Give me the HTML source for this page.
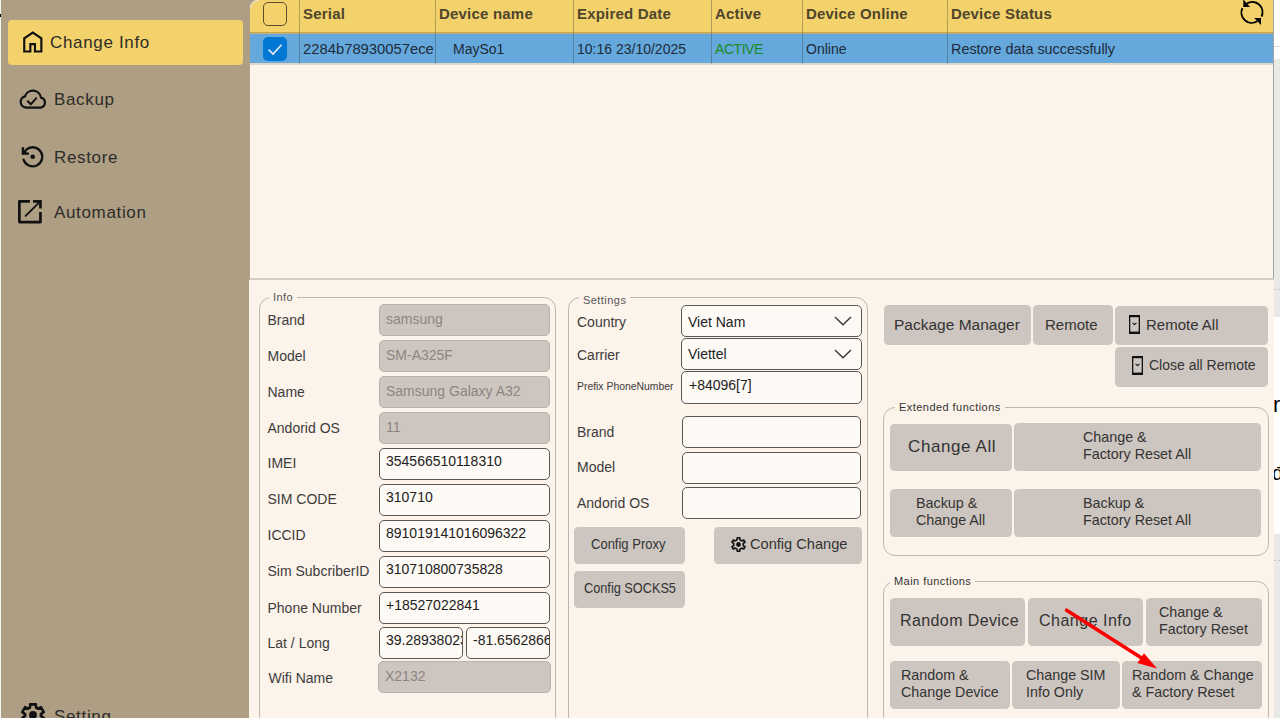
<!DOCTYPE html>
<html><head><meta charset="utf-8">
<style>
*{box-sizing:border-box;margin:0;padding:0}
html,body{width:1280px;height:718px;overflow:hidden;background:#fff;font-family:"Liberation Sans",sans-serif;color:#222}
.a{position:absolute;white-space:nowrap}
#side{position:absolute;left:1px;top:0;width:249px;height:718px;background:#ad9e84}
.hl{position:absolute;left:7.5px;top:20px;width:235.5px;height:44.5px;background:#f3d26b;border-radius:4px}
.nav{position:absolute;font-size:17px;letter-spacing:0.66px;color:#2e2c29;line-height:20px}
.ico{position:absolute}
/* table */
#thead{position:absolute;left:250px;top:0;width:1023px;height:34px;background:#f3d26b}
#trow{position:absolute;left:250px;top:34px;width:1023px;height:31px;background:#64a8dc;border-bottom:2px solid;border-image:linear-gradient(#cdc4b6,#e2d6c6) 1}
#tbody{position:absolute;left:250px;top:65px;width:1023px;height:213px;background:#fcf3ea;border-left:1px solid #fffaf3}
.sep{position:absolute;top:0;width:1px;height:64px;background:rgba(60,60,60,0.35)}
.th{position:absolute;top:5px;font-size:15px;font-weight:bold;color:#4f452c;line-height:18px;letter-spacing:0.2px}
.td{position:absolute;top:40px;font-size:14px;color:#1f2a3a;line-height:18px}
.cb{position:absolute;left:263px;width:24px;height:24px;border-radius:5px}
#hline{position:absolute;left:250px;top:278px;width:1024px;height:2px;background:#d3cdc6}
#panel{position:absolute;left:249px;top:280px;width:1025px;height:438px;background:#fcf3ea}
.gb{position:absolute;border:1px solid #b9b7b4;border-radius:12px}
.gl{position:absolute;font-size:11px;letter-spacing:0.45px;color:#555;background:#fcf3ea;padding:0 4px;line-height:12px}
.lbl{position:absolute;font-size:14px;color:#3c3c3c;line-height:16px;margin-top:0}
.inp{position:absolute;height:32px;border-radius:5px;font-size:14px;line-height:28px;padding-left:6px;overflow:hidden}
.dis{background:#cdc6c0;border:1px solid #b8b2ac;color:#8b8580}
.en{background:#fdf9f5;border:1px solid #5a5855;color:#222;line-height:25px}
.btn{position:absolute;background:#cdc5bf;border-radius:4.5px;color:#333;font-size:14.3px;text-align:center}
.btn span{position:absolute;white-space:nowrap}
</style></head><body>
<div class="a" style="left:0;top:0;width:1px;height:718px;background:#f4f4f4"></div>
<div class="a" style="left:0;top:14px;width:1px;height:3px;background:#000"></div>
<div id="side">
</div>
<div class="hl"></div>

<svg class="ico" style="left:22px;top:30px" width="22" height="24" viewBox="0 0 22 24"><path d="M2.25,21.45 V8.4 L10.8,2.5 L19.35,8.4 V21.45 H12.95 V14.15 H8.35 V21.45 Z" fill="none" stroke="#111" stroke-width="2.15" stroke-linejoin="miter"/></svg>
<div class="nav" style="left:50px;top:33px">Change Info</div>
<svg class="ico" style="left:18px;top:88px" width="30" height="22" viewBox="0 0 30 22"><path d="M8,19.6 H22.6 A5.1,5.1 0 0 0 23,9.6 A8.3,8.3 0 0 0 6.9,8.4 A5.7,5.7 0 0 0 8,19.6 Z" fill="none" stroke="#111" stroke-width="2.2"/><path d="M9.3,12.8 L12.8,16.3 L18.7,9.7" fill="none" stroke="#111" stroke-width="2"/></svg>
<div class="nav" style="left:54px;top:90px">Backup</div>
<svg class="ico" style="left:16px;top:142px" width="30" height="28" viewBox="0 0 30 28"><path d="M7.3,11.3 L10.31,7.70 A9.55,9.55 0 1 1 7.57,17.59" fill="none" stroke="#111" stroke-width="2.3" stroke-linecap="round"/><path d="M6.9,5.2 V11.6 H13" fill="none" stroke="#111" stroke-width="2.4"/><path d="M6.9,7 L6.9,11.6 L11.5,11.6 Z" fill="#111"/><circle cx="16.7" cy="14.8" r="2.3" fill="#111"/></svg>
<div class="nav" style="left:54px;top:148px">Restore</div>
<svg class="ico" style="left:17px;top:199px" width="26" height="26" viewBox="0 0 26 26"><path d="M12.9,2.35 H2.35 V23.05 H23.45 V13" fill="none" stroke="#111" stroke-width="2.7" stroke-linejoin="round"/><path d="M16,2.35 H23.45 V9.5" fill="none" stroke="#111" stroke-width="2.7"/><path d="M8.6,16.9 L22.6,3.1" stroke="#111" stroke-width="1.9" stroke-linecap="round"/></svg>
<div class="nav" style="left:54px;top:203px">Automation</div>
<svg class="ico" style="left:18.5px;top:701px" width="28" height="28" viewBox="0 0 28 28"><path d="M10.80,6.67 L11.40,3.31 L16.60,3.31 L17.20,6.67 L18.75,7.56 L21.96,6.40 L24.56,10.91 L21.95,13.11 L21.95,14.89 L24.56,17.09 L21.96,21.60 L18.75,20.44 L17.20,21.33 L16.60,24.69 L11.40,24.69 L10.80,21.33 L9.25,20.44 L6.04,21.60 L3.44,17.09 L6.05,14.89 L6.05,13.11 L3.44,10.91 L6.04,6.40 L9.25,7.56 Z" fill="none" stroke="#111" stroke-width="2.7" stroke-linejoin="miter"/><circle cx="14" cy="14" r="3.9" fill="#111"/></svg>
<div class="nav" style="left:54px;top:707px">Setting</div>

<div id="thead"></div>
<div id="trow"></div>
<div class="a" style="left:250px;top:32px;width:1023px;height:1px;background:#c8a64c"></div>
<div class="a" style="left:250px;top:33px;width:1023px;height:1px;background:#bfae80"></div>
<div id="tbody"></div>
<div class="a" style="left:250px;top:0;width:9px;height:9px;background:radial-gradient(circle at 100% 100%, transparent 8.2px, #e8e2d6 8.6px, #e8e2d6 9.2px, #ad9e84 9.8px)"></div>
<div class="sep" style="left:299px"></div>
<div class="sep" style="left:435px"></div>
<div class="sep" style="left:573px"></div>
<div class="sep" style="left:711px"></div>
<div class="sep" style="left:802px"></div>
<div class="sep" style="left:947px"></div>
<div class="cb" style="top:2px;border:1.8px solid #5a4c2c;background:transparent"></div>
<div class="cb" style="top:37px;background:#0078d4"></div>
<svg class="ico" style="left:263px;top:37px" width="24" height="24" viewBox="0 0 24 24"><path d="M5.6,12.6 L10,17.1 L18.6,7.8" fill="none" stroke="#e6eef8" stroke-width="1.6"/></svg>
<div class="th" style="left:303px">Serial</div>
<div class="th" style="left:439px">Device name</div>
<div class="th" style="left:577px">Expired Date</div>
<div class="th" style="left:715px">Active</div>
<div class="th" style="left:806px">Device Online</div>
<div class="th" style="left:951px">Device Status</div>
<div class="td" style="left:303px;font-size:14.8px">2284b78930057ece</div>
<div class="td" style="left:453px">MaySo1</div>
<div class="td" style="left:577px">10:16 23/10/2025</div>
<div class="td" style="left:715px;color:#1a8a26;letter-spacing:-0.45px">ACTIVE</div>
<div class="td" style="left:806px">Online</div>
<div class="td" style="left:951px;font-size:14.4px">Restore data successfully</div>
<svg class="ico" style="left:1236px;top:0" width="32" height="28" viewBox="0 0 32 28"><path d="M10.8,3.5 A10.3,10.3 0 0 1 25.55,16.6" fill="none" stroke="#000" stroke-width="1.9"/><path d="M6.4,8.2 A10.3,10.3 0 0 0 21.2,21.3" fill="none" stroke="#000" stroke-width="1.9"/><path d="M7.3,-0.6 L7.3,6.9 L14,6.9 Z" fill="#000"/><path d="M18.2,17.9 L25,17.9 L25,24.9 Z" fill="#000"/></svg>
<div class="a" style="left:1274px;top:0;width:6px;height:718px;background:#fff;overflow:hidden">
<div class="a" style="left:0;top:46px;width:6px;height:1px;background:#dcdcdc"></div>
<div class="a" style="left:0;top:59px;width:6px;height:258px;background:#e9e9e5"></div>
<div class="a" style="left:0;top:289px;width:6px;height:1px;background:repeating-linear-gradient(90deg,#c8c8c4 0 2px,transparent 2px 4px)"></div>
<div class="a" style="left:-1px;top:393px;font-size:22px;line-height:24px;color:#000">r</div>
<div class="a" style="left:-2px;top:461px;font-size:20px;line-height:24px;color:#000">đ</div>
<div class="a" style="left:0;top:534px;width:6px;height:184px;background:#e9e9e5"></div>
<div class="a" style="left:0;top:560px;width:6px;height:1px;background:repeating-linear-gradient(90deg,#c8c8c4 0 2px,transparent 2px 4px)"></div>
</div>
<div class="a" style="left:1273px;top:0;width:1px;height:278px;background:#a3a3a3"></div>
<div id="hline"></div>
<div id="panel"></div>

<div class="gb" style="left:259px;top:297px;width:297px;height:440px"></div>
<div class="gl" style="left:269px;top:291px">Info</div>
<div class="lbl" style="left:267.5px;top:312px">Brand</div>
<div class="lbl" style="left:267.5px;top:348px">Model</div>
<div class="lbl" style="left:267.5px;top:384px">Name</div>
<div class="lbl" style="left:267.5px;top:420px">Andorid OS</div>
<div class="lbl" style="left:267.5px;top:455px">IMEI</div>
<div class="lbl" style="left:267.5px;top:490.5px">SIM CODE</div>
<div class="lbl" style="left:267.5px;top:526.5px">ICCID</div>
<div class="lbl" style="left:267.5px;top:563px">Sim SubcriberID</div>
<div class="lbl" style="left:267.5px;top:599.5px">Phone Number</div>
<div class="lbl" style="left:267.5px;top:635px">Lat / Long</div>
<div class="lbl" style="left:268.5px;top:669.5px">Wifi Name</div>
<div class="inp dis" style="left:379px;top:304px;width:171px">samsung</div>
<div class="inp dis" style="left:379px;top:340px;width:171px">SM-A325F</div>
<div class="inp dis" style="left:379px;top:376px;width:171px">Samsung Galaxy A32</div>
<div class="inp dis" style="left:379px;top:412px;width:171px">11</div>
<div class="inp en" style="left:379px;top:448px;width:171px">354566510118310</div>
<div class="inp en" style="left:379px;top:484px;width:171px">310710</div>
<div class="inp en" style="left:379px;top:520px;width:171px">891019141016096322</div>
<div class="inp en" style="left:379px;top:556px;width:171px">310710800735828</div>
<div class="inp en" style="left:379px;top:592px;width:171px">+18527022841</div>
<div class="inp en" style="left:379px;top:627px;width:84px;height:32px">39.28938023</div>
<div class="inp en" style="left:466px;top:627px;width:84px;height:32px">-81.65628660</div>
<div class="inp dis" style="left:378px;top:661px;width:173px;height:32px">X2132</div>

<div class="gb" style="left:568px;top:297px;width:300px;height:440px"></div>
<div class="gl" style="left:579px;top:294px">Settings</div>
<div class="lbl" style="left:577px;top:314px">Country</div>
<div class="lbl" style="left:577px;top:347px">Carrier</div>
<div class="lbl" style="left:577px;top:378.5px;font-size:10.4px">Prefix PhoneNumber</div>
<div class="lbl" style="left:577px;top:424px">Brand</div>
<div class="lbl" style="left:577px;top:459px">Model</div>
<div class="lbl" style="left:577px;top:495px">Andorid OS</div>
<div class="inp en" style="left:681px;top:305px;width:181px;height:32px;padding-left:6px;line-height:32px">Viet Nam<svg class="ico" style="right:9px;top:9px" width="18" height="12" viewBox="0 0 18 12"><path d="M1,2 L9,9.8 L17,2" fill="none" stroke="#333" stroke-width="1.3"/></svg></div>
<div class="inp en" style="left:681px;top:338px;width:181px;height:32px;padding-left:6px;line-height:31px">Viettel<svg class="ico" style="right:9px;top:9px" width="18" height="12" viewBox="0 0 18 12"><path d="M1,2 L9,9.8 L17,2" fill="none" stroke="#333" stroke-width="1.3"/></svg></div>
<div class="inp en" style="left:681px;top:371px;width:181px;height:33px;padding-left:7px;line-height:26px">+84096[7]</div>
<div class="inp en" style="left:682px;top:416px;width:179px;height:32px"></div>
<div class="inp en" style="left:682px;top:452px;width:179px;height:32px"></div>
<div class="inp en" style="left:682px;top:487px;width:179px;height:32px"></div>
<div class="btn" style="left:574px;top:527px;width:111px;height:37px;font-size:14.3px"><span style="left:17px;top:9px;transform:scaleX(0.91);transform-origin:0 0">Config Proxy</span></div>
<div class="btn" style="left:714px;top:527px;width:148px;height:37px;font-size:14.6px"><span style="left:36px;top:9px">Config Change</span></div><svg class="ico" style="left:730px;top:536px" width="17" height="17" viewBox="0 0 17 17"><path d="M7.21,1.72 L9.79,1.72 L9.92,3.81 L11.85,4.93 L13.72,3.99 L15.02,6.23 L13.27,7.38 L13.27,9.62 L15.02,10.77 L13.72,13.01 L11.85,12.07 L9.92,13.19 L9.79,15.28 L7.21,15.28 L7.08,13.19 L5.15,12.07 L3.28,13.01 L1.98,10.77 L3.73,9.62 L3.73,7.38 L1.98,6.23 L3.28,3.99 L5.15,4.93 L7.08,3.81 Z" fill="none" stroke="#111" stroke-width="1.6" stroke-linejoin="round"/><circle cx="8.5" cy="8.5" r="2.4" fill="#111"/></svg>
<div class="btn" style="left:574px;top:571px;width:111px;height:37px;font-size:14.3px"><span style="left:10px;top:9px;transform:scaleX(0.89);transform-origin:0 0">Config SOCKS5</span></div>

<div class="btn" style="left:884px;top:305px;width:147px;height:40px;font-size:15.5px"><span style="left:10px;top:11px">Package Manager</span></div>
<div class="btn" style="left:1033px;top:305px;width:80px;height:40px;font-size:15px"><span style="left:12px;top:11px">Remote</span></div>
<div class="btn" style="left:1115px;top:306px;width:153px;height:39px;font-size:15px"><span style="left:31px;top:9.5px">Remote All</span></div>
<svg class="ico" style="left:1129px;top:315px" width="11" height="19" viewBox="0 0 11 19"><path d="M0.65,0 V19 M10.35,0 V19" stroke="#111" stroke-width="1.3"/><rect x="0" y="0" width="11" height="2.2" fill="#111"/><rect x="0" y="16.6" width="11" height="2.4" fill="#111"/><path d="M3.6,8 L5.5,9.6 L7.4,8" fill="none" stroke="#111" stroke-width="1.1"/></svg>
<div class="btn" style="left:1115px;top:347px;width:153px;height:40px;font-size:14px"><span style="left:34px;top:10px">Close all Remote</span></div>
<svg class="ico" style="left:1132px;top:356px" width="11" height="19" viewBox="0 0 11 19"><path d="M0.65,0 V19 M10.35,0 V19" stroke="#111" stroke-width="1.3"/><rect x="0" y="0" width="11" height="2.2" fill="#111"/><rect x="0" y="16.6" width="11" height="2.4" fill="#111"/><path d="M3.6,8 L5.5,9.6 L7.4,8" fill="none" stroke="#111" stroke-width="1.1"/></svg>
<div class="gb" style="left:883px;top:407px;width:386px;height:149px"></div>
<div class="gl" style="left:895px;top:401px;color:#333">Extended functions</div>
<div class="btn" style="left:890px;top:424px;width:122px;height:47px;font-size:17px;letter-spacing:0.6px"><span style="left:18px;top:13px">Change All</span></div>
<div class="btn" style="left:1014px;top:423px;width:247px;height:48px"><span style="left:69px;top:6px;text-align:left;line-height:17px">Change &amp;<br>Factory Reset All</span></div>
<div class="btn" style="left:890px;top:489px;width:122px;height:48px"><span style="left:26px;top:6px;text-align:left;line-height:17px">Backup &amp;<br>Change All</span></div>
<div class="btn" style="left:1014px;top:489px;width:247px;height:48px"><span style="left:69px;top:6px;text-align:left;line-height:17px">Backup &amp;<br>Factory Reset All</span></div>
<div class="gb" style="left:883px;top:581px;width:386px;height:160px"></div>
<div class="gl" style="left:890px;top:575px;color:#333">Main functions</div>
<div class="btn" style="left:890px;top:597.5px;width:135px;height:48px;font-size:16px;letter-spacing:0.4px"><span style="left:10px;top:14.5px">Random Device</span></div>
<div class="btn" style="left:1028px;top:597.5px;width:115px;height:48px;font-size:16px;letter-spacing:0.5px"><span style="left:11px;top:14.5px">Change Info</span></div>
<div class="btn" style="left:1146px;top:597.5px;width:116px;height:48px"><span style="left:13px;top:6px;text-align:left;line-height:17px">Change &amp;<br>Factory Reset</span></div>
<div class="btn" style="left:890px;top:661px;width:120px;height:48px"><span style="left:11px;top:5.5px;text-align:left;line-height:17px">Random &amp;<br>Change Device</span></div>
<div class="btn" style="left:1012px;top:661px;width:108px;height:48px"><span style="left:14px;top:5.5px;text-align:left;line-height:17px">Change SIM<br>Info Only</span></div>
<div class="btn" style="left:1122px;top:661px;width:140px;height:48px"><span style="left:10px;top:5.5px;text-align:left;line-height:17px">Random &amp; Change<br>&amp; Factory Reset</span></div>
<svg class="ico" style="left:0;top:0" width="1280" height="718"><path d="M1066.6,610.3 L1142,658.3" stroke="#fc0000" stroke-width="3.7" stroke-linecap="round"/><path d="M1157,668.6 L1144,653.3 L1137.4,662.9 Z" fill="#fc0000"/></svg>
</body></html>
